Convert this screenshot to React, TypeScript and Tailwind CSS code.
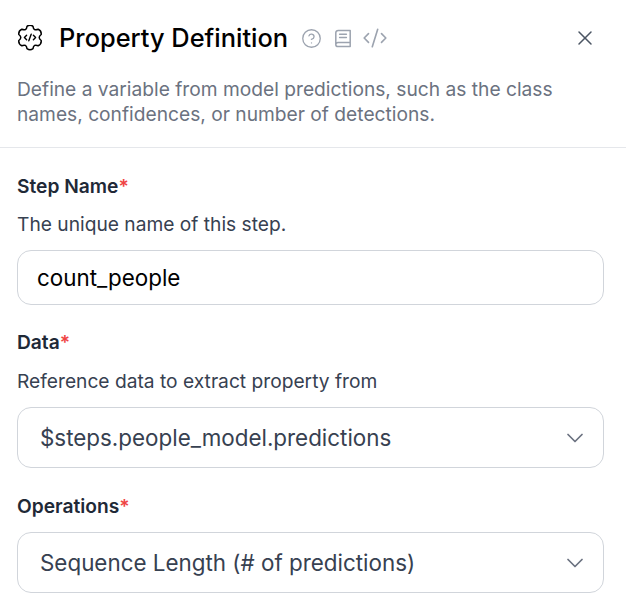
import { ChevronDown, CircleHelp, CodeXml, X } from "lucide-react";
import React from "react";

function polar(angle: number, r: number) {
  const t = (angle * Math.PI) / 180;
  return `${(13 + r * Math.cos(t)).toFixed(2)} ${(12.5 + r * Math.sin(t)).toFixed(2)}`;
}

function gearPath() {
  let d = `M${polar(-90 - 15, 11.6)}`;
  for (let i = 0; i < 6; i++) {
    const a = -90 + 60 * i;
    d += `Q${polar(a, 13.4)} ${polar(a + 15, 11.6)}`;
    d += `Q${polar(a + 30, 7.2)} ${polar(a + 60 - 15, 11.6)}`;
  }
  return d + "Z";
}

function GearCode() {
  return (
    <svg width="26" height="26" viewBox="0 0 26 26" fill="none" stroke="#000" strokeWidth="1.5" strokeLinejoin="round" strokeLinecap="round">
      <path d={gearPath()} />
      <path d="M9.6 10.3 7.4 12.5l2.2 2.2M16.4 10.3l2.2 2.2-2.2 2.2M14.2 9.2l-2.4 6.6" strokeWidth="1.4" />
    </svg>
  );
}

function BookIcon() {
  return (
    <svg width="18" height="19" viewBox="0 0 18 19" fill="none" stroke="#9ca3af" strokeWidth="1.5" strokeLinejoin="round" strokeLinecap="round" className="ml-[12px]">
      <path d="M1.8 15.6V3.8a2.4 2.4 0 0 1 2.4-2.4h12v16.2H3.9a2.1 2.1 0 0 1-2.1-2 2.1 2.1 0 0 1 2.1-2.1h12.3" />
      <path d="M5.6 5.2h6.8M5.6 8.4h6.8" />
    </svg>
  );
}

function Label({ children }: { children: React.ReactNode }) {
  return (
    <div className="text-[19.2px] leading-[24px] font-semibold text-[#1f2937]">
      {children}
      <span className="text-[#ef4444]">*</span>
    </div>
  );
}

function Select({ value }: { value: string }) {
  return (
    <div className="flex h-[61px] items-center justify-between rounded-[14px] border border-[#d1d5db] pl-[22px] pr-[14px]">
      <span className="text-[22.4px] text-[#374151]">{value}</span>
      <ChevronDown size={28} strokeWidth={1.5} className="text-[#6b7280]" />
    </div>
  );
}

export default function App() {
  return (
    <div className="h-[616px] w-[626px] overflow-hidden bg-white font-['Inter',sans-serif]">
      <div className="border-b border-[#e5e7eb] pb-[20px] pl-[17px] pr-[29px] pt-[20px]">
        <div className="flex h-[36px] items-center">
          <GearCode />
          <h1 className="ml-[16px] text-[25.4px] font-medium leading-[36px] text-black">Property Definition</h1>
          <CircleHelp size={21} strokeWidth={1.5} className="ml-[13px] text-[#9ca3af]" />
          <BookIcon />
          <CodeXml size={26} strokeWidth={1.5} className="ml-[10px] text-[#9ca3af]" />
          <X size={24} strokeWidth={1.5} className="ml-auto text-[#4b5563]" />
        </div>
        <p className="mt-[21px] text-[19.2px] leading-[25px] text-[#6b7280]">
          Define a variable from model predictions, such as the class names, confidences, or number of detections.
        </p>
      </div>
      <div className="px-[17px] pr-[22px] pt-[26px]">
        <Label>Step Name</Label>
        <p className="mt-[14px] text-[19.2px] leading-[24px] text-[#374151]">The unique name of this step.</p>
        <div className="mt-[14px] flex h-[55px] items-center rounded-[14px] border border-[#d1d5db] px-[19px] text-[22.4px] text-black">
          count_people
        </div>
        <div className="mt-[25px]">
          <Label>Data</Label>
        </div>
        <p className="mt-[15px] text-[19.2px] leading-[24px] text-[#374151]">Reference data to extract property from</p>
        <div className="mt-[14px]">
          <Select value="$steps.people_model.predictions" />
        </div>
        <div className="mt-[26px]">
          <Label>Operations</Label>
        </div>
        <div className="mt-[14px]">
          <Select value="Sequence Length (# of predictions)" />
        </div>
      </div>
    </div>
  );
}
